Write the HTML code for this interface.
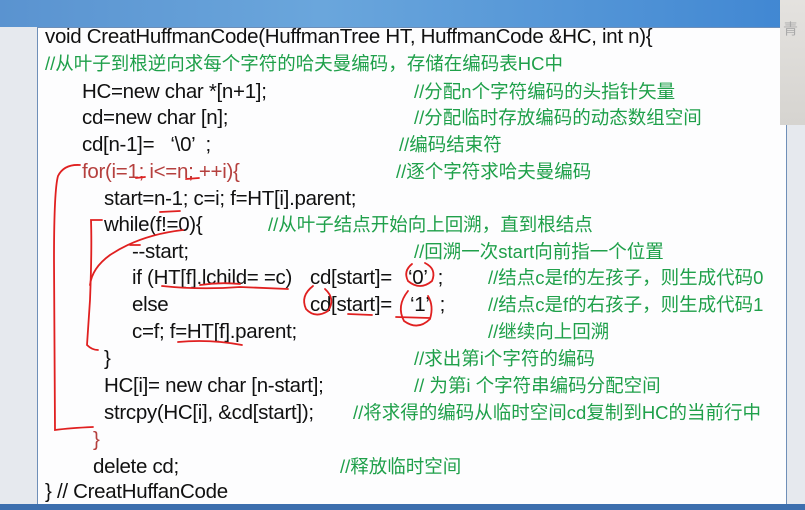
<!DOCTYPE html>
<html><head><meta charset="utf-8"><style>
html,body{margin:0;padding:0}
body{width:805px;height:510px;position:relative;overflow:hidden;background:#e6e9ee;font-family:"Liberation Sans","Noto Sans CJK SC",sans-serif}
.top{position:absolute;left:0;top:0;width:805px;height:27px;background:linear-gradient(90deg,#5a93d0,#6aa6dc 40%,#3f86d2)}
.bot{position:absolute;left:0;top:504px;width:805px;height:6px;background:#3d6fae}
.box{position:absolute;left:37px;top:27px;width:748px;height:476px;background:#fdfdfe;border:1px solid #6f8fb8}
.side{position:absolute;left:780px;top:0;width:25px;height:125px;background:linear-gradient(#e4e2df,#d6d4d0);}
.side span{position:absolute;left:3px;top:18px;font-size:15px;color:#aaa}
.w{position:absolute;left:0;top:3px;width:805px;height:507px}
.t{position:absolute;font-size:20.5px;color:#111;white-space:pre;line-height:24px;letter-spacing:-0.3px}
.g{color:#1fa04a;font-size:18.5px;letter-spacing:0}
.r{color:#b5403e}
svg{position:absolute;left:0;top:0}
</style></head><body>
<div class="top"></div>
<div class="box"></div>
<div class="bot"></div>
<div class="side"><span>青</span></div>
<div class="w">
<div class="t" style="left:45px;top:22px">void CreatHuffmanCode(HuffmanTree HT, HuffmanCode &amp;HC, int n){</div>
<div class="t g" style="left:45px;top:49px">//从叶子到根逆向求每个字符的哈夫曼编码，存储在编码表HC中</div>
<div class="t" style="left:82px;top:77px">HC=new char *[n+1];</div><div class="t g" style="left:414px;top:77px">//分配n个字符编码的头指针矢量</div>
<div class="t" style="left:82px;top:103px">cd=new char [n];</div><div class="t g" style="left:414px;top:103px">//分配临时存放编码的动态数组空间</div>
<div class="t" style="left:82px;top:130px">cd[n-1]=   ‘\0’  ;</div><div class="t g" style="left:399px;top:130px">//编码结束符</div>
<div class="t r" style="left:82px;top:157px">for(i=1; i&lt;=n; ++i){</div><div class="t g" style="left:396px;top:157px">//逐个字符求哈夫曼编码</div>
<div class="t" style="left:104px;top:184px">start=n-1; c=i; f=HT[i].parent;</div>
<div class="t" style="left:104px;top:210px">while(f!=0){</div><div class="t g" style="left:268px;top:210px">//从叶子结点开始向上回溯，直到根结点</div>
<div class="t" style="left:132px;top:237px">--start;</div><div class="t g" style="left:414px;top:237px">//回溯一次start向前指一个位置</div>
<div class="t" style="left:132px;top:263px">if (HT[f].lchild= =c)</div><div class="t" style="left:310px;top:263px">cd[start]=</div><div class="t" style="left:408px;top:263px">‘0’  ;</div><div class="t g" style="left:488px;top:263px">//结点c是f的左孩子，则生成代码0</div>
<div class="t" style="left:132px;top:290px">else</div><div class="t" style="left:310px;top:290px">cd[start]=</div><div class="t" style="left:410px;top:290px">‘1’  ;</div><div class="t g" style="left:488px;top:290px">//结点c是f的右孩子，则生成代码1</div>
<div class="t" style="left:132px;top:317px">c=f; f=HT[f].parent;</div><div class="t g" style="left:488px;top:317px">//继续向上回溯</div>
<div class="t" style="left:104px;top:344px">}</div><div class="t g" style="left:414px;top:344px">//求出第i个字符的编码</div>
<div class="t" style="left:104px;top:371px">HC[i]= new char [n-start];</div><div class="t g" style="left:414px;top:371px">// 为第i 个字符串编码分配空间</div>
<div class="t" style="left:104px;top:398px">strcpy(HC[i], &amp;cd[start]);</div><div class="t g" style="left:353px;top:398px">//将求得的编码从临时空间cd复制到HC的当前行中</div>
<div class="t r" style="left:93px;top:425px">}</div>
<div class="t" style="left:93px;top:452px">delete cd;</div><div class="t g" style="left:340px;top:452px">//释放临时空间</div>
<div class="t" style="left:45px;top:477px">} // CreatHuffanCode</div>
</div>
<svg width="805" height="510" fill="none" stroke="#e02020" stroke-width="1.8" stroke-linecap="round">
<path d="M80 165 Q64 164 58 176 Q54 190 54 260 L55 430 Q70 428 93 427"/>
<path d="M102 220 L91 220 Q92 250 90 300 L87 345 Q92 350 98 350"/>
<path d="M183 230 Q140 235 110 255 Q92 268 90 285"/>
<path d="M130 245 L140 245"/>
<path d="M136 178 L145 177"/><path d="M186 179 L199 178"/>
<path d="M160 212 L180 211"/>
<path d="M162 286 Q200 290 240 287 L288 289"/>
<path d="M200 285 Q220 282 240 284"/>
<path d="M412 264 Q403 271 408 281 Q420 291 432 281 Q437 269 425 263"/>
<path d="M313 286 Q300 296 306 309 Q315 319 328 311 Q336 299 325 289"/>
<path d="M348 314 L372 315"/>
<path d="M408 291 Q396 306 404 321 Q418 331 430 319 Q434 306 428 296"/>
<path d="M396 317 L430 318"/>
<path d="M178 342 Q210 339 242 345"/>
</svg>
</body></html>
